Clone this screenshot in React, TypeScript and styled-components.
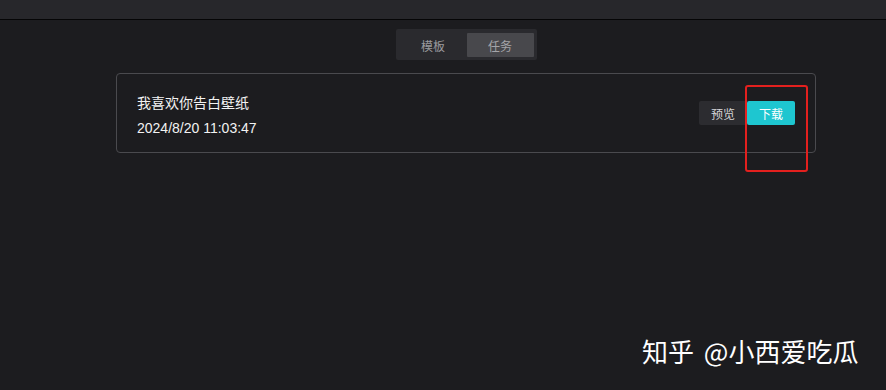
import React from "react";
import styled, { createGlobalStyle } from "styled-components";

const Global = createGlobalStyle`
  html, body { margin: 0; padding: 0; background: #1c1c1f; }
  body { font-family: "Liberation Sans", "Noto Sans CJK SC", sans-serif; }
  #root { min-height: 390px; }
`;

const Page = styled.div`
  position: relative;
  width: 886px;
  height: 390px;
  overflow: hidden;
  background: #1c1c1f;
  display: flex;
  flex-direction: column;
`;

const TopBar = styled.div`
  height: 19px;
  background: #27272b;
  border-bottom: 1px solid #050506;
`;

const Content = styled.div`
  margin-left: 116px;
  width: 700px;
  display: flex;
  flex-direction: column;
  align-items: center;
`;

const Segmented = styled.div`
  margin-top: 9px;
  display: flex;
  padding: 4px 3px 3px 4px;
  background: #2a2a2e;
  border-radius: 2px;
`;

const Tab = styled.div<{ $active?: boolean }>`
  width: 67px;
  height: 24px;
  display: flex;
  align-items: center;
  justify-content: center;
  font-family: "Noto Sans CJK SC", sans-serif;
  font-size: 12px;
  color: ${(p) => (p.$active ? "#a4a4a8" : "#9a9a9e")};
  background: ${(p) => (p.$active ? "#48484c" : "transparent")};
  border-radius: 1px;
`;

const Card = styled.div`
  margin-top: 13px;
  align-self: stretch;
  height: 80px;
  box-sizing: border-box;
  border: 1px solid #4a4a4e;
  border-radius: 4px;
  display: flex;
  align-items: center;
  justify-content: space-between;
  padding: 0 20px;
`;

const Info = styled.div`
  display: flex;
  flex-direction: column;
  gap: 6px;
  margin-top: 4px;
`;

const Title = styled.div`
  font-family: "Noto Sans CJK SC", sans-serif;
  font-size: 14px;
  line-height: 20px;
  color: #f2f2f2;
`;

const Time = styled.div`
  font-family: "Liberation Sans", sans-serif;
  font-size: 14px;
  line-height: 20px;
  color: #f2f2f2;
`;

const Actions = styled.div`
  display: flex;
`;

const Btn = styled.div<{ $primary?: boolean }>`
  width: 48px;
  height: 24px;
  display: flex;
  align-items: center;
  justify-content: center;
  font-family: "Noto Sans CJK SC", sans-serif;
  font-size: 12px;
  color: ${(p) => (p.$primary ? "#ffffff" : "#d6d6d8")};
  background: ${(p) => (p.$primary ? "#1ec6d0" : "#2c2c30")};
  border-radius: 2px;
`;

const Highlight = styled.div`
  position: absolute;
  left: 745px;
  top: 85px;
  width: 63px;
  height: 87px;
  box-sizing: border-box;
  border: 2px solid #e3201e;
  border-radius: 3px;
`;

const Watermark = styled.div`
  position: absolute;
  left: 642px;
  top: 332px;
  font-family: "Noto Sans CJK SC", sans-serif;
  font-size: 26px;
  line-height: 38px;
  font-weight: 400;
  word-spacing: 4px;
  color: #ffffff;
  white-space: nowrap;
`;

export default function App() {
  return (
    <Page>
      <Global />
      <TopBar />
      <Content>
        <Segmented>
          <Tab>模板</Tab>
          <Tab $active>任务</Tab>
        </Segmented>
        <Card>
          <Info>
            <Title>我喜欢你告白壁纸</Title>
            <Time>2024/8/20 11:03:47</Time>
          </Info>
          <Actions>
            <Btn>预览</Btn>
            <Btn $primary>下载</Btn>
          </Actions>
        </Card>
      </Content>
      <Highlight />
      <Watermark>知乎 @小西爱吃瓜</Watermark>
    </Page>
  );
}
